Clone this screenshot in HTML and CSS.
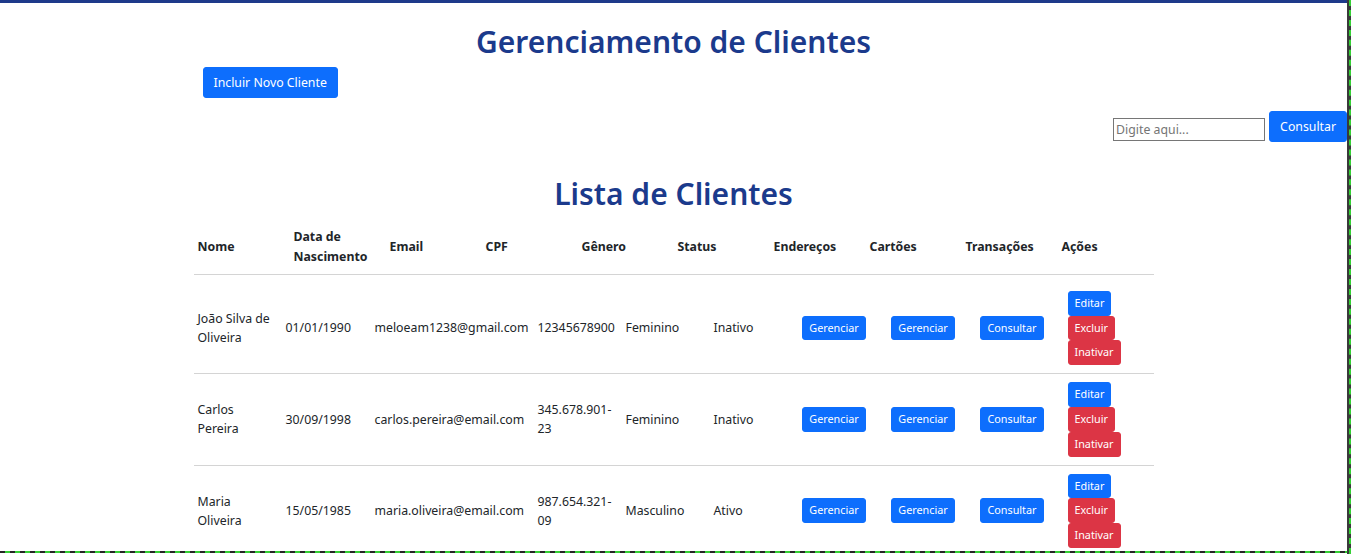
FILE: index.html
```html
<!DOCTYPE html>
<html lang="pt-BR">
<head>
<meta charset="utf-8">
<title>Gerenciamento de Clientes</title>
<link rel="stylesheet" href="styles.css">
</head>
<body>
<div class="page">
  <header class="top container">
    <h1 class="title">Gerenciamento de Clientes</h1>
    <button class="btn btn-primary btn-add">Incluir Novo Cliente</button>
  </header>

  <form class="search">
    <input class="search-input" type="text" placeholder="Digite aqui...">
    <button class="btn btn-primary" type="button">Consultar</button>
  </form>

  <section class="container list">
    <h1 class="title title-list">Lista de Clientes</h1>
    <div class="table">
      <div class="thead">
        <div class="th">Nome</div>
        <div class="th">Data de Nascimento</div>
        <div class="th">Email</div>
        <div class="th">CPF</div>
        <div class="th">Gênero</div>
        <div class="th">Status</div>
        <div class="th">Endereços</div>
        <div class="th">Cartões</div>
        <div class="th">Transações</div>
        <div class="th">Ações</div>
      </div>
      <div class="tbody">
        <div class="tr">
          <div class="td">João Silva de Oliveira</div>
          <div class="td">01/01/1990</div>
          <div class="td">meloeam1238@gmail.com</div>
          <div class="td">12345678900</div>
          <div class="td">Feminino</div>
          <div class="td">Inativo</div>
          <div class="td td-btn"><button class="btn btn-sm btn-primary">Gerenciar</button></div>
          <div class="td td-btn"><button class="btn btn-sm btn-primary">Gerenciar</button></div>
          <div class="td td-btn"><button class="btn btn-sm btn-primary">Consultar</button></div>
          <div class="td td-actions">
            <button class="btn btn-sm btn-primary">Editar</button>
            <button class="btn btn-sm btn-danger">Excluir</button>
            <button class="btn btn-sm btn-danger">Inativar</button>
          </div>
        </div>
        <div class="tr">
          <div class="td">Carlos Pereira</div>
          <div class="td">30/09/1998</div>
          <div class="td">carlos.pereira@email.com</div>
          <div class="td">345.678.901-23</div>
          <div class="td">Feminino</div>
          <div class="td">Inativo</div>
          <div class="td td-btn"><button class="btn btn-sm btn-primary">Gerenciar</button></div>
          <div class="td td-btn"><button class="btn btn-sm btn-primary">Gerenciar</button></div>
          <div class="td td-btn"><button class="btn btn-sm btn-primary">Consultar</button></div>
          <div class="td td-actions">
            <button class="btn btn-sm btn-primary">Editar</button>
            <button class="btn btn-sm btn-danger">Excluir</button>
            <button class="btn btn-sm btn-danger">Inativar</button>
          </div>
        </div>
        <div class="tr">
          <div class="td">Maria Oliveira</div>
          <div class="td">15/05/1985</div>
          <div class="td">maria.oliveira@email.com</div>
          <div class="td">987.654.321-09</div>
          <div class="td">Masculino</div>
          <div class="td">Ativo</div>
          <div class="td td-btn"><button class="btn btn-sm btn-primary">Gerenciar</button></div>
          <div class="td td-btn"><button class="btn btn-sm btn-primary">Gerenciar</button></div>
          <div class="td td-btn"><button class="btn btn-sm btn-primary">Consultar</button></div>
          <div class="td td-actions">
            <button class="btn btn-sm btn-primary">Editar</button>
            <button class="btn btn-sm btn-danger">Excluir</button>
            <button class="btn btn-sm btn-danger">Inativar</button>
          </div>
        </div>
      </div>
    </div>
  </section>
</div>
<div class="frame-right"></div>
<div class="frame-bottom"></div>
</body>
</html>
```

FILE: styles.css
```css
* { box-sizing: border-box; }

html, body { height: 100%; }

body {
  margin: 0;
  border-top: 3px solid #1e3a8a;
  background: #fff;
  color: #212529;
  font-family: "Segoe UI", "Noto Sans", "Open Sans", sans-serif;
  font-size: 12.3px;
  line-height: 19.2px;
  overflow: hidden;
}

.page {
  margin-right: 4px;
}

.container {
  width: 960px;
  margin: 0 auto;
}

.top {
  padding-top: 20px;
}

.title {
  margin: 0 0 6px;
  font-size: 30px;
  line-height: 38px;
  font-weight: 600;
  color: #1b3a8c;
  text-align: center;
}

.title-list {
  margin-top: 33px;
}

.btn {
  display: inline-block;
  font-family: inherit;
  font-size: 12.3px;
  line-height: 19.2px;
  padding: 5px 10px;
  border: 1px solid transparent;
  border-radius: 3px;
  color: #fff;
  cursor: pointer;
  white-space: nowrap;
}

.btn-sm {
  font-size: 10.8px;
  line-height: 16.8px;
  padding: 3px 6px;
  border-radius: 3px;
}

.btn-primary { background: #0d6efd; border-color: #0d6efd; }
.btn-danger { background: #dc3545; border-color: #dc3545; }

.btn-add {
  margin-left: 9px;
}

.search {
  display: flex;
  justify-content: flex-end;
  align-items: flex-end;
  gap: 4px;
  margin: 13px 0 0;
}

.search-input {
  width: 152px;
  height: 23px;
  margin-bottom: 1px;
  padding: 1px 2px;
  border: 1px solid #767676;
  border-radius: 0;
  font-family: inherit;
  font-size: 12.3px;
  color: #212529;
}

.search-input::placeholder { color: #757575; }

.thead {
  display: grid;
  grid-template-columns: repeat(10, 1fr);
  border-bottom: 1px solid #d4d4d4;
}

.th {
  display: flex;
  align-items: center;
  padding: 8px 4px;
  font-weight: 700;
  color: #212529;
}

.tbody {
  padding-top: 8px;
}

.tr {
  display: grid;
  grid-template-columns: 88px 89px 163px 88px 88px 80px 89px 89px 89px 1fr;
  align-items: center;
  border-bottom: 1px solid #d4d4d4;
}

.td {
  padding: 0 4px;
  color: #212529;
}

.td-btn {
  text-align: center;
}

.td-actions {
  display: flex;
  flex-direction: column;
  align-items: flex-start;
  padding: 8px 4px 8px 11px;
}

.frame-right {
  position: fixed;
  top: 0;
  right: 0;
  bottom: 0;
  width: 4px;
  background: #3a3a3a;
  border-right: 2px dashed #35d035;
}

.frame-bottom {
  position: fixed;
  left: 0;
  right: 4px;
  bottom: 1px;
  height: 2px;
  background: repeating-linear-gradient(90deg, #262626 0 5px, #35d035 5px 10px);
}
```
